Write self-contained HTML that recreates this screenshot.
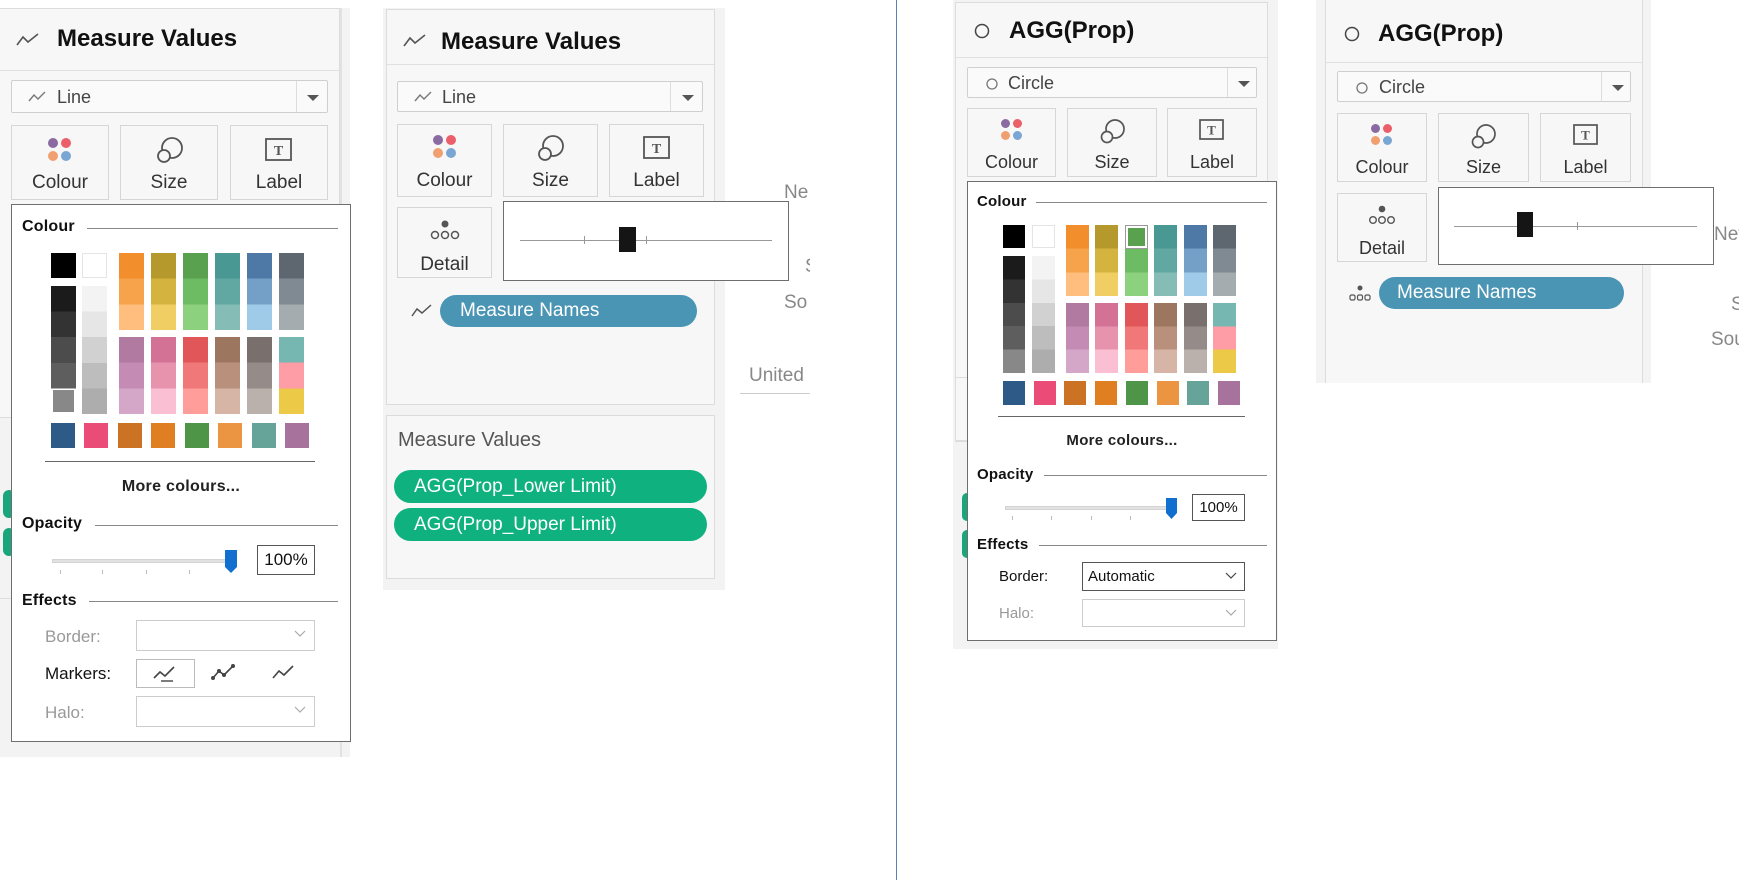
<!DOCTYPE html>
<html><head><meta charset="utf-8"><style>
*{box-sizing:border-box;margin:0;padding:0}
body{width:1739px;height:882px;background:#fff;position:relative;overflow:hidden;font-family:"Liberation Sans",sans-serif;color:#333}
.a{position:absolute}
.bg{background:#f3f3f3}
.pn{background:#f7f7f7;border:1px solid #dcdcdc}
.title{font-weight:bold;font-size:24px;color:#111;white-space:nowrap}
.dd{background:#fafafa;border:1px solid #cfcfcf;border-radius:2px;font-size:18px;color:#444}
.dd .sep{position:absolute;top:0;bottom:0;width:1px;background:#ddd}
.tri{position:absolute;width:0;height:0;border-left:6px solid transparent;border-right:6px solid transparent;border-top:6px solid #555}
.btn{background:#f7f7f7;border:1px solid #d6d6d6;font-size:18px;color:#333;text-align:center}
.btn span{position:absolute;left:0;right:0}
.pop{background:#fff;border:1.5px solid #6e6e6e}
.hd{font-size:16px;color:#111;font-weight:bold;letter-spacing:.2px}
.ln{height:1px;background:#888}
.col{border:1px solid #e4e4e4}
.pill{border-radius:16px;color:#fff;font-size:19px;white-space:nowrap}
.lbl{font-size:16px;color:#999}
.box{border:1px solid #ccc;background:#fff}
.gray{color:#888;font-size:19px;white-space:nowrap}
</style></head><body>

<!-- vertical blue line -->
<div class="a" style="left:896px;top:0;width:1px;height:880px;background:#5b7fb8"></div>

<!-- ========== PANEL 1 ========== -->
<div class="a bg" style="left:0;top:8px;width:350px;height:749px"></div>
<div class="a" style="left:340px;top:8px;width:2px;height:749px;background:#e2e2e2"></div>
<div class="a pn" style="left:-1px;top:8px;width:341px;height:410px;border-left:none"></div>
<div class="a" style="left:0;top:70px;width:340px;height:1px;background:#e0e0e0"></div>
<svg class="a" style="left:16px;top:32px" width="24" height="16" viewBox="0 0 24 16"><path d="M1 13 L7 5 L12 10 L22 2" fill="none" stroke="#555" stroke-width="1.6"/></svg>
<div class="a title" style="left:57px;top:25px">Measure Values</div>
<div class="a dd" style="left:11px;top:80px;width:317px;height:33px">
 <svg class="a" style="left:16px;top:10px" width="18" height="12"><path d="M1 10 L6 4 L10 8 L17 1" fill="none" stroke="#777" stroke-width="1.4"/></svg>
 <span class="a" style="left:45px;top:6px">Line</span>
 <div class="sep" style="left:284px"></div><div class="tri" style="left:295px;top:14px"></div>
</div>
<div class="a btn" style="left:11px;top:125px;width:98px;height:75px"></div>
<div class="a btn" style="left:120px;top:125px;width:98px;height:75px"></div>
<div class="a btn" style="left:230px;top:125px;width:98px;height:75px"></div>
<svg class="a" style="left:47px;top:137px" width="26" height="26"><circle cx="6" cy="6" r="5" fill="#8a6aa0"/><circle cx="19" cy="6" r="5" fill="#ea5f6a"/><circle cx="6" cy="19" r="5" fill="#f0a070"/><circle cx="19" cy="19" r="5" fill="#7aa6d4"/></svg>
<svg class="a" style="left:155px;top:135px" width="30" height="30"><circle cx="17" cy="13" r="10" fill="none" stroke="#555" stroke-width="1.8"/><circle cx="9" cy="21" r="6" fill="#f7f7f7" stroke="#555" stroke-width="1.8"/></svg>
<svg class="a" style="left:265px;top:138px" width="28" height="24"><rect x="1" y="1" width="25" height="21" fill="none" stroke="#555" stroke-width="1.8"/><text x="13.5" y="17" font-size="14" font-weight="bold" text-anchor="middle" fill="#555" font-family="Liberation Serif">T</text></svg>
<div class="a" style="left:11px;top:172px;width:98px;text-align:center;font-size:19px;color:#333">Colour</div>
<div class="a" style="left:120px;top:172px;width:98px;text-align:center;font-size:19px;color:#333">Size</div>
<div class="a" style="left:230px;top:172px;width:98px;text-align:center;font-size:19px;color:#333">Label</div>
<!-- left bottom bits -->
<div class="a" style="left:0;top:598px;width:12px;height:1px;background:#ddd"></div>
<div class="a" style="left:3px;top:490px;width:12px;height:28px;border-radius:14px;background:#1aa67a"></div>
<div class="a" style="left:3px;top:528px;width:12px;height:28px;border-radius:14px;background:#1aa67a"></div>

<div class="a pop" style="left:11px;top:204px;width:340px;height:538px"></div>
<div class="a hd" style="left:22px;top:218px">Colour</div>
<div class="a ln" style="left:87px;top:228px;width:251px"></div>
<!-- swatches -->
<div class="a" style="left:51px;top:253px;width:25px;height:25px;background:#000"></div>
<div class="a col" style="left:82px;top:253px;width:25px;height:25px;background:#fff"></div>
<div class="a" style="left:51px;top:286px;width:25px;height:128px;background:linear-gradient(#1b1b1b 0 20%,#333 0 40%,#4c4c4c 0 60%,#5e5e5e 0 80%,#fff 0)"></div>
<div class="a" style="left:53px;top:390px;width:21px;height:22px;background:#888"></div>
<div class="a" style="left:82px;top:286px;width:25px;height:128px;background:linear-gradient(#f3f3f3 0 20%,#e6e6e6 0 40%,#d1d1d1 0 60%,#bdbdbd 0 80%,#adadad 0)"></div>
<div class="a" style="left:119px;top:253px;width:25px;height:77px;background:linear-gradient(#f28e2b 0 33.3%,#f7a34c 0 66.6%,#ffbe7d 0)"></div>
<div class="a" style="left:151px;top:253px;width:25px;height:77px;background:linear-gradient(#b6992d 0 33.3%,#d4b43e 0 66.6%,#f1ce63 0)"></div>
<div class="a" style="left:183px;top:253px;width:25px;height:77px;background:linear-gradient(#59a14f 0 33.3%,#6dbb62 0 66.6%,#8cd17d 0)"></div>
<div class="a" style="left:215px;top:253px;width:25px;height:77px;background:linear-gradient(#499894 0 33.3%,#62a8a2 0 66.6%,#86bcb6 0)"></div>
<div class="a" style="left:247px;top:253px;width:25px;height:77px;background:linear-gradient(#4e79a7 0 33.3%,#74a0c8 0 66.6%,#a0cbe8 0)"></div>
<div class="a" style="left:279px;top:253px;width:25px;height:77px;background:linear-gradient(#5e6770 0 33.3%,#7f8a93 0 66.6%,#a5acaf 0)"></div>
<div class="a" style="left:119px;top:337px;width:25px;height:77px;background:linear-gradient(#b07aa1 0 33.3%,#c48bb5 0 66.6%,#d4a6c8 0)"></div>
<div class="a" style="left:151px;top:337px;width:25px;height:77px;background:linear-gradient(#d37295 0 33.3%,#e793ae 0 66.6%,#fabfd2 0)"></div>
<div class="a" style="left:183px;top:337px;width:25px;height:77px;background:linear-gradient(#e15759 0 33.3%,#f07878 0 66.6%,#ff9d9a 0)"></div>
<div class="a" style="left:215px;top:337px;width:25px;height:77px;background:linear-gradient(#9d7660 0 33.3%,#b9907c 0 66.6%,#d7b5a6 0)"></div>
<div class="a" style="left:247px;top:337px;width:25px;height:77px;background:linear-gradient(#79706e 0 33.3%,#958c89 0 66.6%,#bab0ac 0)"></div>
<div class="a" style="left:279px;top:337px;width:25px;height:77px;background:linear-gradient(#76b7b2 0 33.3%,#ff9da7 0 66.6%,#edc948 0)"></div>
<div class="a" style="left:51px;top:423px;width:24px;height:25px;background:#2e5a87"></div>
<div class="a" style="left:84px;top:423px;width:24px;height:25px;background:#ea4c77"></div>
<div class="a" style="left:118px;top:423px;width:24px;height:25px;background:#cc7224"></div>
<div class="a" style="left:151px;top:423px;width:24px;height:25px;background:#e07f22"></div>
<div class="a" style="left:185px;top:423px;width:24px;height:25px;background:#4e9548"></div>
<div class="a" style="left:218px;top:423px;width:24px;height:25px;background:#eb9441"></div>
<div class="a" style="left:252px;top:423px;width:24px;height:25px;background:#66a398"></div>
<div class="a" style="left:285px;top:423px;width:24px;height:25px;background:#a7729b"></div>
<div class="a ln" style="left:45px;top:461px;width:270px;background:#666"></div>
<div class="a" style="left:11px;top:478px;width:340px;text-align:center;font-size:16px;font-weight:bold;color:#222;letter-spacing:.3px">More colours...</div>
<div class="a hd" style="left:22px;top:515px">Opacity</div>
<div class="a ln" style="left:95px;top:525px;width:243px"></div>
<div class="a" style="left:52px;top:559px;width:180px;height:4px;background:#e2e2e2;border:1px solid #d4d4d4"></div>
<div class="a" style="left:60px;top:570px;width:1px;height:4px;background:#bbb"></div>
<div class="a" style="left:102px;top:570px;width:1px;height:4px;background:#bbb"></div>
<div class="a" style="left:146px;top:570px;width:1px;height:4px;background:#bbb"></div>
<div class="a" style="left:189px;top:570px;width:1px;height:4px;background:#bbb"></div>
<svg class="a" style="left:224px;top:549px" width="14" height="25"><path d="M1 1 H13 V18 L7 24 L1 18 Z" fill="#1170cf"/></svg>
<div class="a" style="left:257px;top:545px;width:58px;height:30px;border:1px solid #555;font-size:17px;color:#111;text-align:center;line-height:28px">100%</div>
<div class="a hd" style="left:22px;top:592px">Effects</div>
<div class="a ln" style="left:89px;top:601px;width:249px"></div>
<div class="a lbl" style="left:45px;top:627px;font-size:17px">Border:</div>
<div class="a box" style="left:136px;top:620px;width:179px;height:31px"></div>
<svg class="a" style="left:294px;top:630px" width="12" height="8"><path d="M1 1 L6 6 L11 1" fill="none" stroke="#aaa" stroke-width="1.2"/></svg>
<div class="a" style="left:45px;top:664px;font-size:17px;color:#111">Markers:</div>
<div class="a box" style="left:136px;top:659px;width:59px;height:29px;border-color:#bbb"></div>
<svg class="a" style="left:152px;top:663px" width="28" height="20"><path d="M2 15 L8 9 L13 13 L22 4" fill="none" stroke="#444" stroke-width="1.6"/><path d="M9 18 H21" stroke="#444" stroke-width="1.4"/></svg>
<svg class="a" style="left:210px;top:663px" width="28" height="20"><path d="M3 15 L9 8 L14 12 L23 3" fill="none" stroke="#444" stroke-width="1.6"/><circle cx="3" cy="15" r="2" fill="#444"/><circle cx="9" cy="8" r="2" fill="#444"/><circle cx="14" cy="12" r="2" fill="#444"/><circle cx="23" cy="3" r="2" fill="#444"/></svg>
<svg class="a" style="left:270px;top:663px" width="28" height="20"><path d="M3 15 L9 8 L14 12 L23 3" fill="none" stroke="#444" stroke-width="1.6"/></svg>
<div class="a lbl" style="left:45px;top:703px;font-size:17px">Halo:</div>
<div class="a box" style="left:136px;top:696px;width:179px;height:31px"></div>
<svg class="a" style="left:294px;top:706px" width="12" height="8"><path d="M1 1 L6 6 L11 1" fill="none" stroke="#aaa" stroke-width="1.2"/></svg>

<!-- ========== PANEL 2 ========== -->
<div class="a bg" style="left:383px;top:8px;width:342px;height:582px"></div>
<div class="a pn" style="left:386px;top:9px;width:329px;height:396px"></div>
<div class="a" style="left:387px;top:64px;width:327px;height:1px;background:#e0e0e0"></div>
<svg class="a" style="left:403px;top:33px" width="24" height="16"><path d="M1 13 L7 5 L12 10 L22 2" fill="none" stroke="#555" stroke-width="1.6"/></svg>
<div class="a title" style="left:441px;top:28px">Measure Values</div>
<div class="a dd" style="left:397px;top:81px;width:306px;height:31px">
 <svg class="a" style="left:16px;top:9px" width="18" height="12"><path d="M1 10 L6 4 L10 8 L17 1" fill="none" stroke="#777" stroke-width="1.4"/></svg>
 <span class="a" style="left:44px;top:5px">Line</span>
 <div class="sep" style="left:272px"></div><div class="tri" style="left:284px;top:13px"></div>
</div>
<div class="a btn" style="left:397px;top:124px;width:95px;height:73px"></div>
<div class="a btn" style="left:503px;top:124px;width:95px;height:73px"></div>
<div class="a btn" style="left:609px;top:124px;width:95px;height:73px"></div>
<div class="a btn" style="left:397px;top:207px;width:95px;height:71px"></div>
<svg class="a" style="left:432px;top:134px" width="26" height="26"><circle cx="6" cy="6" r="5" fill="#8a6aa0"/><circle cx="19" cy="6" r="5" fill="#ea5f6a"/><circle cx="6" cy="19" r="5" fill="#f0a070"/><circle cx="19" cy="19" r="5" fill="#7aa6d4"/></svg>
<svg class="a" style="left:536px;top:133px" width="30" height="30"><circle cx="17" cy="13" r="10" fill="none" stroke="#555" stroke-width="1.8"/><circle cx="9" cy="21" r="6" fill="#f7f7f7" stroke="#555" stroke-width="1.8"/></svg>
<svg class="a" style="left:643px;top:136px" width="28" height="24"><rect x="1" y="1" width="25" height="21" fill="none" stroke="#555" stroke-width="1.8"/><text x="13.5" y="17" font-size="14" font-weight="bold" text-anchor="middle" fill="#555" font-family="Liberation Serif">T</text></svg>
<svg class="a" style="left:430px;top:219px" width="30" height="22"><circle cx="15" cy="5" r="3.5" fill="#555"/><circle cx="5" cy="16" r="3.5" fill="none" stroke="#555" stroke-width="1.5"/><circle cx="15" cy="16" r="3.5" fill="none" stroke="#555" stroke-width="1.5"/><circle cx="25" cy="16" r="3.5" fill="none" stroke="#555" stroke-width="1.5"/></svg>
<div class="a" style="left:397px;top:170px;width:95px;text-align:center;font-size:19px">Colour</div>
<div class="a" style="left:503px;top:170px;width:95px;text-align:center;font-size:19px">Size</div>
<div class="a" style="left:609px;top:170px;width:95px;text-align:center;font-size:19px">Label</div>
<div class="a" style="left:397px;top:254px;width:95px;text-align:center;font-size:19px">Detail</div>
<svg class="a" style="left:411px;top:303px" width="22" height="16"><path d="M1 13 L6 6 L11 10 L20 2" fill="none" stroke="#555" stroke-width="1.5"/></svg>
<div class="a pill" style="left:440px;top:295px;width:257px;height:32px;background:#4a94b4;padding:5px 0 0 20px">Measure Names</div>
<!-- size popup -->
<div class="a pop" style="left:503px;top:201px;width:286px;height:80px;border-width:1.5px"></div>
<div class="a" style="left:520px;top:240px;width:252px;height:1px;background:#999"></div>
<div class="a" style="left:584px;top:236px;width:1px;height:8px;background:#999"></div>
<div class="a" style="left:646px;top:236px;width:1px;height:8px;background:#999"></div>
<div class="a" style="left:619px;top:227px;width:17px;height:25px;background:#151515"></div>
<!-- panel 2b -->
<div class="a pn" style="left:386px;top:415px;width:329px;height:164px"></div>
<div class="a" style="left:398px;top:429px;font-size:20px;color:#555">Measure Values</div>
<div class="a pill" style="left:394px;top:470px;width:313px;height:33px;background:#0fb17e;padding:6px 0 0 20px;border-radius:17px">AGG(Prop_Lower Limit)</div>
<div class="a pill" style="left:394px;top:508px;width:313px;height:33px;background:#0fb17e;padding:6px 0 0 20px;border-radius:17px">AGG(Prop_Upper Limit)</div>
<!-- side texts -->
<div class="a gray" style="left:784px;top:182px">Ne</div>
<div class="a gray" style="left:805px;top:256px">S</div>
<div class="a gray" style="left:784px;top:292px">So</div>
<div class="a gray" style="left:749px;top:365px">United</div>
<div class="a" style="left:740px;top:393px;width:70px;height:1px;background:#ccc"></div>
<div class="a" style="left:810px;top:150px;width:30px;height:260px;background:#fff"></div>

<!-- ========== PANEL 3 ========== -->
<div class="a bg" style="left:953px;top:0;width:325px;height:649px"></div>
<div class="a pn" style="left:955px;top:2px;width:313px;height:440px"></div>
<div class="a" style="left:956px;top:57px;width:311px;height:1px;background:#e0e0e0"></div>
<svg class="a" style="left:974px;top:23px" width="16" height="16"><circle cx="8" cy="8" r="6.5" fill="none" stroke="#444" stroke-width="1.5"/></svg>
<div class="a title" style="left:1009px;top:17px">AGG(Prop)</div>
<div class="a dd" style="left:967px;top:67px;width:290px;height:31px">
 <svg class="a" style="left:17px;top:9px" width="14" height="14"><circle cx="7" cy="7" r="5" fill="none" stroke="#777" stroke-width="1.3"/></svg>
 <span class="a" style="left:40px;top:5px">Circle</span>
 <div class="sep" style="left:259px"></div><div class="tri" style="left:270px;top:13px"></div>
</div>
<div class="a btn" style="left:967px;top:108px;width:89px;height:69px"></div>
<div class="a btn" style="left:1067px;top:108px;width:90px;height:69px"></div>
<div class="a btn" style="left:1167px;top:108px;width:90px;height:69px"></div>
<svg class="a" style="left:1000px;top:118px" width="24" height="24"><circle cx="5.5" cy="5.5" r="4.5" fill="#8a6aa0"/><circle cx="17.5" cy="5.5" r="4.5" fill="#ea5f6a"/><circle cx="5.5" cy="17.5" r="4.5" fill="#f0a070"/><circle cx="17.5" cy="17.5" r="4.5" fill="#7aa6d4"/></svg>
<svg class="a" style="left:1099px;top:117px" width="28" height="28"><circle cx="16" cy="12" r="9" fill="none" stroke="#555" stroke-width="1.7"/><circle cx="8" cy="20" r="5.5" fill="#f7f7f7" stroke="#555" stroke-width="1.7"/></svg>
<svg class="a" style="left:1199px;top:119px" width="26" height="22"><rect x="1" y="1" width="23" height="19" fill="none" stroke="#555" stroke-width="1.7"/><text x="12.5" y="15.5" font-size="13" font-weight="bold" text-anchor="middle" fill="#555" font-family="Liberation Serif">T</text></svg>
<div class="a" style="left:967px;top:152px;width:89px;text-align:center;font-size:18px">Colour</div>
<div class="a" style="left:1067px;top:152px;width:90px;text-align:center;font-size:18px">Size</div>
<div class="a" style="left:1167px;top:152px;width:90px;text-align:center;font-size:18px">Label</div>
<div class="a" style="left:956px;top:377px;width:12px;height:1px;background:#ddd"></div>
<div class="a" style="left:956px;top:440px;width:12px;height:1px;background:#ddd"></div>
<div class="a" style="left:962px;top:493px;width:10px;height:28px;border-radius:14px;background:#1aa67a"></div>
<div class="a" style="left:962px;top:530px;width:10px;height:28px;border-radius:14px;background:#1aa67a"></div>

<div class="a pop" style="left:967px;top:181px;width:310px;height:460px"></div>
<div class="a hd" style="left:977px;top:193px;font-size:15px">Colour</div>
<div class="a ln" style="left:1036px;top:202px;width:231px"></div>
<div class="a" style="left:1003px;top:225px;width:22px;height:23px;background:#000"></div>
<div class="a col" style="left:1032px;top:225px;width:23px;height:23px;background:#fff"></div>
<div class="a" style="left:1003px;top:256px;width:22px;height:117px;background:linear-gradient(#1b1b1b 0 20%,#333 0 40%,#4c4c4c 0 60%,#5e5e5e 0 80%,#888 0)"></div>
<div class="a" style="left:1032px;top:256px;width:23px;height:117px;background:linear-gradient(#f3f3f3 0 20%,#e6e6e6 0 40%,#d1d1d1 0 60%,#bdbdbd 0 80%,#adadad 0)"></div>
<div class="a" style="left:1066px;top:225px;width:23px;height:71px;background:linear-gradient(#f28e2b 0 33.3%,#f7a34c 0 66.6%,#ffbe7d 0)"></div>
<div class="a" style="left:1095px;top:225px;width:23px;height:71px;background:linear-gradient(#b6992d 0 33.3%,#d4b43e 0 66.6%,#f1ce63 0)"></div>
<div class="a" style="left:1125px;top:225px;width:23px;height:71px;background:linear-gradient(#59a14f 0 33.3%,#6dbb62 0 66.6%,#8cd17d 0)"></div>
<div class="a" style="left:1126px;top:226px;width:21px;height:22px;border:2px solid #fff;outline:1px solid #999"></div>
<div class="a" style="left:1154px;top:225px;width:23px;height:71px;background:linear-gradient(#499894 0 33.3%,#62a8a2 0 66.6%,#86bcb6 0)"></div>
<div class="a" style="left:1184px;top:225px;width:23px;height:71px;background:linear-gradient(#4e79a7 0 33.3%,#74a0c8 0 66.6%,#a0cbe8 0)"></div>
<div class="a" style="left:1213px;top:225px;width:23px;height:71px;background:linear-gradient(#5e6770 0 33.3%,#7f8a93 0 66.6%,#a5acaf 0)"></div>
<div class="a" style="left:1066px;top:303px;width:23px;height:70px;background:linear-gradient(#b07aa1 0 33.3%,#c48bb5 0 66.6%,#d4a6c8 0)"></div>
<div class="a" style="left:1095px;top:303px;width:23px;height:70px;background:linear-gradient(#d37295 0 33.3%,#e793ae 0 66.6%,#fabfd2 0)"></div>
<div class="a" style="left:1125px;top:303px;width:23px;height:70px;background:linear-gradient(#e15759 0 33.3%,#f07878 0 66.6%,#ff9d9a 0)"></div>
<div class="a" style="left:1154px;top:303px;width:23px;height:70px;background:linear-gradient(#9d7660 0 33.3%,#b9907c 0 66.6%,#d7b5a6 0)"></div>
<div class="a" style="left:1184px;top:303px;width:23px;height:70px;background:linear-gradient(#79706e 0 33.3%,#958c89 0 66.6%,#bab0ac 0)"></div>
<div class="a" style="left:1213px;top:303px;width:23px;height:70px;background:linear-gradient(#76b7b2 0 33.3%,#ff9da7 0 66.6%,#edc948 0)"></div>
<div class="a" style="left:1003px;top:381px;width:22px;height:24px;background:#2e5a87"></div>
<div class="a" style="left:1034px;top:381px;width:22px;height:24px;background:#ea4c77"></div>
<div class="a" style="left:1064px;top:381px;width:22px;height:24px;background:#cc7224"></div>
<div class="a" style="left:1095px;top:381px;width:22px;height:24px;background:#e07f22"></div>
<div class="a" style="left:1126px;top:381px;width:22px;height:24px;background:#4e9548"></div>
<div class="a" style="left:1157px;top:381px;width:22px;height:24px;background:#eb9441"></div>
<div class="a" style="left:1187px;top:381px;width:22px;height:24px;background:#66a398"></div>
<div class="a" style="left:1218px;top:381px;width:22px;height:24px;background:#a7729b"></div>
<div class="a ln" style="left:998px;top:416px;width:247px;background:#666"></div>
<div class="a" style="left:967px;top:432px;width:310px;text-align:center;font-size:15px;font-weight:bold;color:#222;letter-spacing:.3px">More colours...</div>
<div class="a hd" style="left:977px;top:466px;font-size:15px">Opacity</div>
<div class="a ln" style="left:1044px;top:475px;width:223px"></div>
<div class="a" style="left:1005px;top:506px;width:165px;height:4px;background:#e2e2e2;border:1px solid #d4d4d4"></div>
<div class="a" style="left:1012px;top:516px;width:1px;height:4px;background:#bbb"></div>
<div class="a" style="left:1051px;top:516px;width:1px;height:4px;background:#bbb"></div>
<div class="a" style="left:1091px;top:516px;width:1px;height:4px;background:#bbb"></div>
<div class="a" style="left:1130px;top:516px;width:1px;height:4px;background:#bbb"></div>
<svg class="a" style="left:1165px;top:497px" width="13" height="23"><path d="M1 1 H12 V16 L6.5 22 L1 16 Z" fill="#1170cf"/></svg>
<div class="a" style="left:1192px;top:494px;width:53px;height:27px;border:1px solid #555;font-size:15px;color:#111;text-align:center;line-height:25px">100%</div>
<div class="a hd" style="left:977px;top:536px;font-size:15px">Effects</div>
<div class="a ln" style="left:1039px;top:545px;width:228px"></div>
<div class="a" style="left:999px;top:568px;font-size:15px;color:#111">Border:</div>
<div class="a" style="left:1082px;top:562px;width:163px;height:29px;border:1px solid #555;background:#fff;font-size:15px;color:#111;padding:5px 0 0 5px">Automatic</div>
<svg class="a" style="left:1225px;top:572px" width="12" height="8"><path d="M1 1 L6 6 L11 1" fill="none" stroke="#444" stroke-width="1.2"/></svg>
<div class="a lbl" style="left:999px;top:605px;font-size:15px">Halo:</div>
<div class="a box" style="left:1082px;top:599px;width:163px;height:28px"></div>
<svg class="a" style="left:1225px;top:609px" width="12" height="8"><path d="M1 1 L6 6 L11 1" fill="none" stroke="#aaa" stroke-width="1.2"/></svg>

<!-- ========== PANEL 4 ========== -->
<div class="a bg" style="left:1316px;top:0;width:335px;height:383px"></div>
<div class="a pn" style="left:1325px;top:-1px;width:318px;height:384px;border-bottom:none"></div>
<div class="a" style="left:1326px;top:62px;width:316px;height:1px;background:#e0e0e0"></div>
<svg class="a" style="left:1344px;top:26px" width="16" height="16"><circle cx="8" cy="8" r="6.5" fill="none" stroke="#444" stroke-width="1.5"/></svg>
<div class="a title" style="left:1378px;top:20px">AGG(Prop)</div>
<div class="a dd" style="left:1337px;top:71px;width:294px;height:31px">
 <svg class="a" style="left:17px;top:9px" width="14" height="14"><circle cx="7" cy="7" r="5" fill="none" stroke="#777" stroke-width="1.3"/></svg>
 <span class="a" style="left:41px;top:5px">Circle</span>
 <div class="sep" style="left:263px"></div><div class="tri" style="left:274px;top:13px"></div>
</div>
<div class="a btn" style="left:1337px;top:113px;width:90px;height:69px"></div>
<div class="a btn" style="left:1438px;top:113px;width:91px;height:69px"></div>
<div class="a btn" style="left:1540px;top:113px;width:91px;height:69px"></div>
<div class="a btn" style="left:1337px;top:193px;width:90px;height:69px"></div>
<svg class="a" style="left:1370px;top:123px" width="24" height="24"><circle cx="5.5" cy="5.5" r="4.5" fill="#8a6aa0"/><circle cx="17.5" cy="5.5" r="4.5" fill="#ea5f6a"/><circle cx="5.5" cy="17.5" r="4.5" fill="#f0a070"/><circle cx="17.5" cy="17.5" r="4.5" fill="#7aa6d4"/></svg>
<svg class="a" style="left:1470px;top:122px" width="28" height="28"><circle cx="16" cy="12" r="9" fill="none" stroke="#555" stroke-width="1.7"/><circle cx="8" cy="20" r="5.5" fill="#f7f7f7" stroke="#555" stroke-width="1.7"/></svg>
<svg class="a" style="left:1573px;top:124px" width="26" height="22"><rect x="1" y="1" width="23" height="19" fill="none" stroke="#555" stroke-width="1.7"/><text x="12.5" y="15.5" font-size="13" font-weight="bold" text-anchor="middle" fill="#555" font-family="Liberation Serif">T</text></svg>
<svg class="a" style="left:1368px;top:205px" width="28" height="20"><circle cx="14" cy="4" r="3.3" fill="#555"/><circle cx="5" cy="15" r="3.3" fill="none" stroke="#555" stroke-width="1.4"/><circle cx="14" cy="15" r="3.3" fill="none" stroke="#555" stroke-width="1.4"/><circle cx="23" cy="15" r="3.3" fill="none" stroke="#555" stroke-width="1.4"/></svg>
<div class="a" style="left:1337px;top:157px;width:90px;text-align:center;font-size:18px">Colour</div>
<div class="a" style="left:1438px;top:157px;width:91px;text-align:center;font-size:18px">Size</div>
<div class="a" style="left:1540px;top:157px;width:91px;text-align:center;font-size:18px">Label</div>
<div class="a" style="left:1337px;top:238px;width:90px;text-align:center;font-size:18px">Detail</div>
<svg class="a" style="left:1349px;top:285px" width="22" height="16"><circle cx="11" cy="3" r="2.5" fill="#555"/><rect x="1" y="10" width="5" height="5" rx="1.5" fill="none" stroke="#555" stroke-width="1.2"/><rect x="8.5" y="10" width="5" height="5" rx="1.5" fill="none" stroke="#555" stroke-width="1.2"/><rect x="16" y="10" width="5" height="5" rx="1.5" fill="none" stroke="#555" stroke-width="1.2"/></svg>
<div class="a pill" style="left:1379px;top:277px;width:245px;height:32px;background:#4a94b4;padding:5px 0 0 18px">Measure Names</div>
<div class="a pop" style="left:1438px;top:187px;width:276px;height:78px"></div>
<div class="a" style="left:1454px;top:226px;width:243px;height:1px;background:#999"></div>
<div class="a" style="left:1577px;top:222px;width:1px;height:8px;background:#999"></div>
<div class="a" style="left:1517px;top:212px;width:16px;height:25px;background:#151515"></div>
<div class="a gray" style="left:1714px;top:224px">Net</div>
<div class="a gray" style="left:1731px;top:294px">S</div>
<div class="a gray" style="left:1711px;top:329px">Sou</div>
</body></html>
